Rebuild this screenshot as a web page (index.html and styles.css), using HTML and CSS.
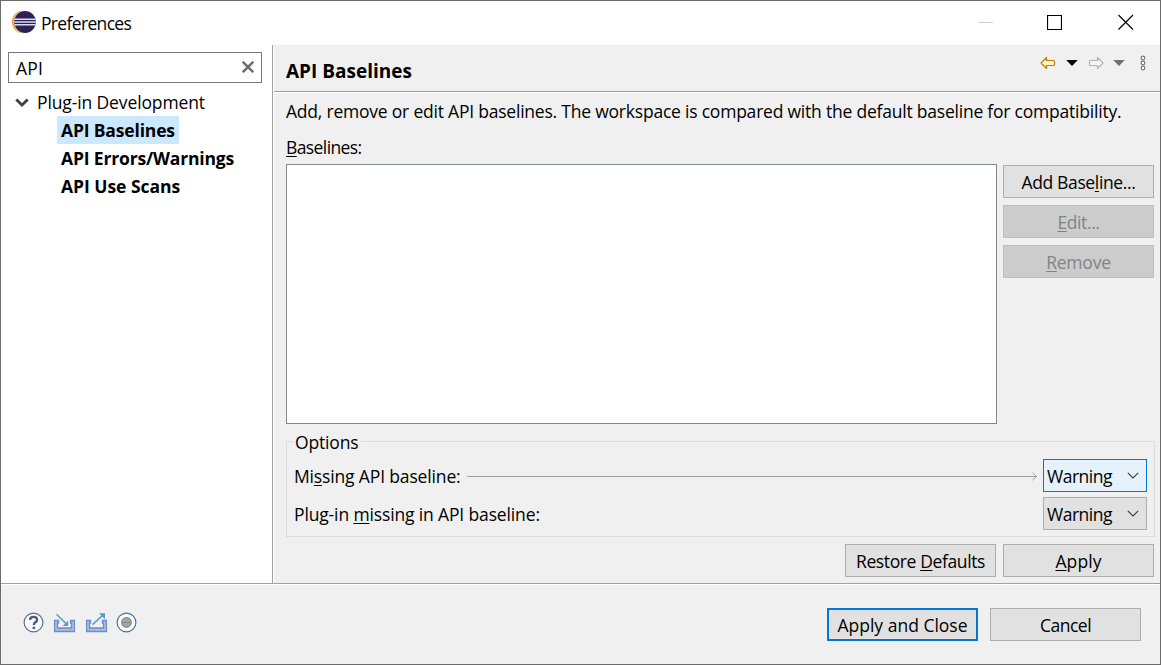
FILE: index.html
```html
<!DOCTYPE html>
<html lang="en">
<head>
<meta charset="utf-8">
<title>Preferences</title>
<link rel="stylesheet" href="styles.css">
</head>
<body>
<div class="window">
  <header class="titlebar">
    <svg class="logo" width="26" height="24" viewBox="0 0 26 24">
      <circle cx="12.2" cy="12" r="11.2" fill="#f7941e"/>
      <circle cx="14.2" cy="12" r="11.6" fill="#fff"/>
      <circle cx="14" cy="12" r="10.900" fill="#2c2255"/>
      <path d="M3.400 9.200h21.300M3.200 12h21.800M3.400 14.800h21.300" stroke="#dcdcee" stroke-width="1.400"/>
    </svg>
    <span class="caption">Preferences</span>
    <div class="controls">
      <svg width="15" height="16" viewBox="0 0 15 16"><path d="M0 8.500h15" stroke="#ccc"/></svg>
      <svg width="15" height="16" viewBox="0 0 15 16"><path d="M.5 1.500h14v14H.5z" fill="none" stroke="#000" stroke-width="1.200"/></svg>
      <svg width="16" height="16" viewBox="0 0 16 16"><path d="M.5 1 15 15.500M15 1 .5 15.500" stroke="#000" stroke-width="1.150"/></svg>
    </div>
  </header>

  <main class="body">
    <nav class="sidebar">
      <div class="filter">
        <span class="t-api">API</span>
        <svg width="12" height="12" viewBox="0 0 12 12"><path d="M.7.7l10.600 10.600M11.300.7.7 11.300" stroke="#6b6b6b" stroke-width="2.400"/></svg>
      </div>
      <div class="tree">
        <div class="node">
          <svg width="14" height="10" viewBox="0 0 14 10"><path d="M1.300 1.500l5.700 5.500 5.700-5.500" fill="none" stroke="#404040" stroke-width="2.800"/></svg>
          <span class="t-plug">Plug-in Development</span>
        </div>
        <div class="leaf selected"><span class="t-base">API Baselines</span></div>
        <div class="leaf"><span class="t-err">API Errors/Warnings</span></div>
        <div class="leaf"><span class="t-use">API Use Scans</span></div>
      </div>
    </nav>

    <section class="page">
      <div class="page-head">
        <h1 class="t-title">API Baselines</h1>
        <div class="nav-tools">
          <svg width="16" height="14" viewBox="0 0 16 14"><path d="M1 7l5.500-5.500V4.500h7q1 0 1 1v3q0 1-1 1h-7v3z" fill="#fff6cf" stroke="#b97d10" stroke-width="1.200" stroke-linejoin="round"/></svg>
          <svg width="12" height="14" viewBox="0 0 12 14"><path d="M.2 4h11.600L6 10z" fill="#000"/></svg>
          <svg width="16" height="14" viewBox="0 0 16 14"><path d="M15 7 9.500 1.500V4.500h-7q-1 0-1 1v3q0 1 1 1h7v3z" fill="#f6f6f6" stroke="#b3b3b3" stroke-width="1.200" stroke-linejoin="round"/></svg>
          <svg width="12" height="14" viewBox="0 0 12 14"><path d="M.2 4h11.600L6 10z" fill="#717171"/></svg>
          <svg width="6" height="16" viewBox="0 0 6 16"><g fill="#fff" stroke="#777" stroke-width="1.200"><circle cx="3" cy="3" r="1.800"/><circle cx="3" cy="8" r="1.800"/><circle cx="3" cy="13" r="1.800"/></g></svg>
        </div>
      </div>
      <div class="page-body">
        <p class="desc"><span class="t-desc">Add, remove or edit API baselines. The workspace is compared with the default baseline for compatibility.</span></p>
        <label class="list-label"><span class="t-list"><u>B</u>aselines:</span></label>
        <div class="list-row">
          <div class="list"></div>
          <div class="list-buttons">
            <button class="btn"><span class="t-add">Add Base<u>l</u>ine...</span></button>
            <button class="btn" disabled><span class="t-edit"><u>E</u>dit...</span></button>
            <button class="btn" disabled><span class="t-rem"><u>R</u>emove</span></button>
          </div>
        </div>
        <div class="options">
          <div class="legend"><span class="t-opt">Options</span></div>
          <div class="option">
            <span class="t-miss">Mi<u>s</u>sing API baseline:</span>
            <span class="leader"><svg width="5" height="9" viewBox="0 0 5 9"><path d="M.5.8 4.300 4.500.5 8.200" fill="none" stroke="#a0a0a0"/></svg></span>
            <div class="combo hot"><span class="t-warn">Warning</span><svg width="12" height="7" viewBox="0 0 12 7"><path d="M.8.8 6 6 11.200.8" fill="none" stroke="#404040" stroke-width="1.200"/></svg></div>
          </div>
          <div class="option">
            <span class="t-plugmiss">Plug-in <u>m</u>issing in API baseline:</span>
            <div class="combo"><span class="t-warn">Warning</span><svg width="12" height="7" viewBox="0 0 12 7"><path d="M.8.8 6 6 11.200.8" fill="none" stroke="#404040" stroke-width="1.200"/></svg></div>
          </div>
        </div>
        <div class="page-actions">
          <button class="btn"><span class="t-restore">Restore <u>D</u>efaults</span></button>
          <button class="btn"><span class="t-apply"><u>A</u>pply</span></button>
        </div>
      </div>
    </section>
  </main>

  <footer class="footer">
    <div class="tools">
      <svg width="21" height="21" viewBox="0 0 21 21"><circle cx="10.500" cy="10.500" r="9.400" fill="#f7f9fc" stroke="#5b6f93" stroke-width="1.200"/><path d="M7 7.900Q7.100 4.900 10.600 4.900T14 7.900Q14 9.300 12.400 10.300Q10.900 11.200 10.900 13" fill="none" stroke="#4a5b85" stroke-width="2.400"/><path d="M9.600 14.700h2.500v2.300H9.600z" fill="#4a5b85"/></svg>
      <svg width="23" height="21" viewBox="0 0 23 21"><path d="M5.500 8.500H1.600v11h19.800V8.500h-3.900v2.500h1v5H4.500v-5h1z" fill="#a9c0e4" stroke="#6c8cc4" stroke-width="1.300"/><path d="M3.500 2.300 14 12.500" stroke="#5b9bcb" stroke-width="1.600"/><path d="M15.200 8.500v5.500H9.700z" fill="#5b9bcb"/></svg>
      <svg width="23" height="21" viewBox="0 0 23 21"><path d="M5.500 8.500H1.600v11h19.800V8.500h-3.900v2.500h1v5H4.500v-5h1z" fill="#a9c0e4" stroke="#6c8cc4" stroke-width="1.300"/><path d="M7.500 12.700 18 3" stroke="#5b9bcb" stroke-width="1.600"/><path d="M14 1.200h6v6z" fill="#5b9bcb"/></svg>
      <svg width="21" height="21" viewBox="0 0 21 21"><circle cx="10.500" cy="10.500" r="9.400" fill="#fbfdff" stroke="#3978ad" stroke-width="1.200"/><circle cx="10.500" cy="10.500" r="4.900" fill="#a5a5a5" stroke="#808080"/><path d="M6 10.500h9" stroke="#8a8a8a"/></svg>
    </div>
    <div class="dialog-actions">
      <button class="btn primary"><span class="t-close">Apply and Close</span></button>
      <button class="btn"><span class="t-cancel">Cancel</span></button>
    </div>
  </footer>
</div>
</body>
</html>
```
FILE: styles.css
```css
* { box-sizing: border-box; }
body { margin: 0; }
svg { display: block; flex: none; }
.window {
  width: 1161px; height: 665px;
  display: flex; flex-direction: column;
  border: 1px solid #6b6b6b;
  background: #fff; color: #000;
  font: 17.5px/24px "Open Sans", "Noto Sans", sans-serif;
  white-space: nowrap;
}
u { text-decoration: underline; text-decoration-thickness: 1px; text-underline-offset: 2px; text-decoration-skip-ink: none; }

.titlebar { flex: none; height: 44px; display: flex; align-items: center; padding: 0 26px 0 10px; }
.logo { margin: -3px 4px 0 0; }
.caption { letter-spacing: -.66px; }
.controls { margin-left: auto; margin-top: -2px; display: flex; gap: 54px; }
.controls svg:last-child { margin-left: 2px; }

.body { flex: none; height: 538px; display: flex; }
.sidebar { flex: none; width: 272px; border-right: 1px solid #a0a0a0; padding: 7px 10px 0 7px; }
.filter { height: 31px; border: 1px solid #7a7a7a; display: flex; align-items: center; justify-content: space-between; padding: 0 7px; }
.filter svg { margin-top: -1px; }
.tree { padding-top: 6px; }
.node { display: flex; align-items: center; gap: 8px; height: 27px; padding-left: 7px; }
.node span { margin-top: -2px; }
.leaf { height: 28px; line-height: 28px; width: max-content; margin-left: 49px; padding: 0 4px; font-weight: 700; }
.leaf.selected { background: #cce8ff; }

.page { flex: 1; margin-left: 1px; background: #f0f0f0; display: flex; flex-direction: column; }
.page-head { height: 48px; border-bottom: 1px solid #fff; box-shadow: inset 0 -1px #a0a0a0; display: flex; justify-content: space-between; padding: 0 14px 0 12px; }
h1 { margin: 14px 0 0; font-size: 19px; line-height: 24px; font-weight: 700; }
.nav-tools { display: flex; align-items: center; height: 36px; gap: 10px; }
.nav-tools svg:nth-child(4) { margin-left: -1px; }
.nav-tools svg:nth-child(5) { margin-left: 5px; }
.page-body { padding: 6px 6px 0 12px; }
.desc { margin: 0; height: 36px; }
.list-label { display: block; height: 29px; }
.list-row { display: flex; gap: 6px; }
.list { width: 711px; height: 260px; background: #fff; border: 1px solid #828790; }
.list-buttons { display: flex; flex-direction: column; gap: 7px; padding-top: 1px; }

.btn { width: 151px; height: 33px; padding: 0; border: 1px solid #adadad; background: #e1e1e1; color: #000; font: inherit; display: flex; justify-content: center; align-items: center; }
.btn:disabled { background: #ccc; border-color: #bfbfbf; color: #838383; }
.btn.primary { border: 2px solid #0078d7; }

.options { height: 96px; margin-top: 17px; margin-right: -1px; border: 1px solid #dcdcdc; padding: 0 7px; }
.legend { width: max-content; height: 17px; margin: 0 0 0 -1px; }
.legend span { display: block; position: relative; top: -12px; background: #f0f0f0; padding: 0 2px; }
.option { display: flex; align-items: center; height: 33px; margin-bottom: 5px; }
.leader { flex: 1; height: 1px; background: #a0a0a0; margin: 2px 6px 0 6px; display: flex; align-items: center; justify-content: flex-end; }
.combo { width: 104px; height: 33px; margin-left: auto; border: 1px solid #adadad; background: #e1e1e1; display: flex; justify-content: space-between; align-items: center; padding: 0 7px 0 3px; }
.combo.hot { border-color: #0078d7; background: #e5f1fb; }
.leader + .combo { margin-left: 0; }
.page-actions { display: flex; justify-content: flex-end; gap: 7px; margin-top: 7px; }

.footer { flex: 1; border-top: 1px solid #a0a0a0; box-shadow: inset 0 1px #fff; background: #f0f0f0; display: flex; justify-content: space-between; padding: 24px 19px 0 22px; }
.tools { display: flex; gap: 9px; padding-top: 4px; }
.tools svg:nth-child(n+3) { margin-left: -.5px; }
.dialog-actions { display: flex; gap: 12px; }

.t-api { letter-spacing: .2px; }
.t-plug { letter-spacing: -.12px; }
.t-base, .t-err { letter-spacing: -.16px; }
.t-use { letter-spacing: -.04px; }
.t-desc { letter-spacing: -.215px; }
.t-list { letter-spacing: -.6px; }
.t-add { letter-spacing: -.36px; }
.t-edit { letter-spacing: -.4px; }
.t-rem { letter-spacing: -.2px; }
.t-opt { letter-spacing: -.15px; }
.t-miss { letter-spacing: -.15px; }
.t-plugmiss { letter-spacing: -.14px; }
.t-warn { letter-spacing: -.5px; }
.t-restore { letter-spacing: -.38px; }
.t-apply { letter-spacing: .1px; }
.t-cancel { letter-spacing: -.5px; }
```
